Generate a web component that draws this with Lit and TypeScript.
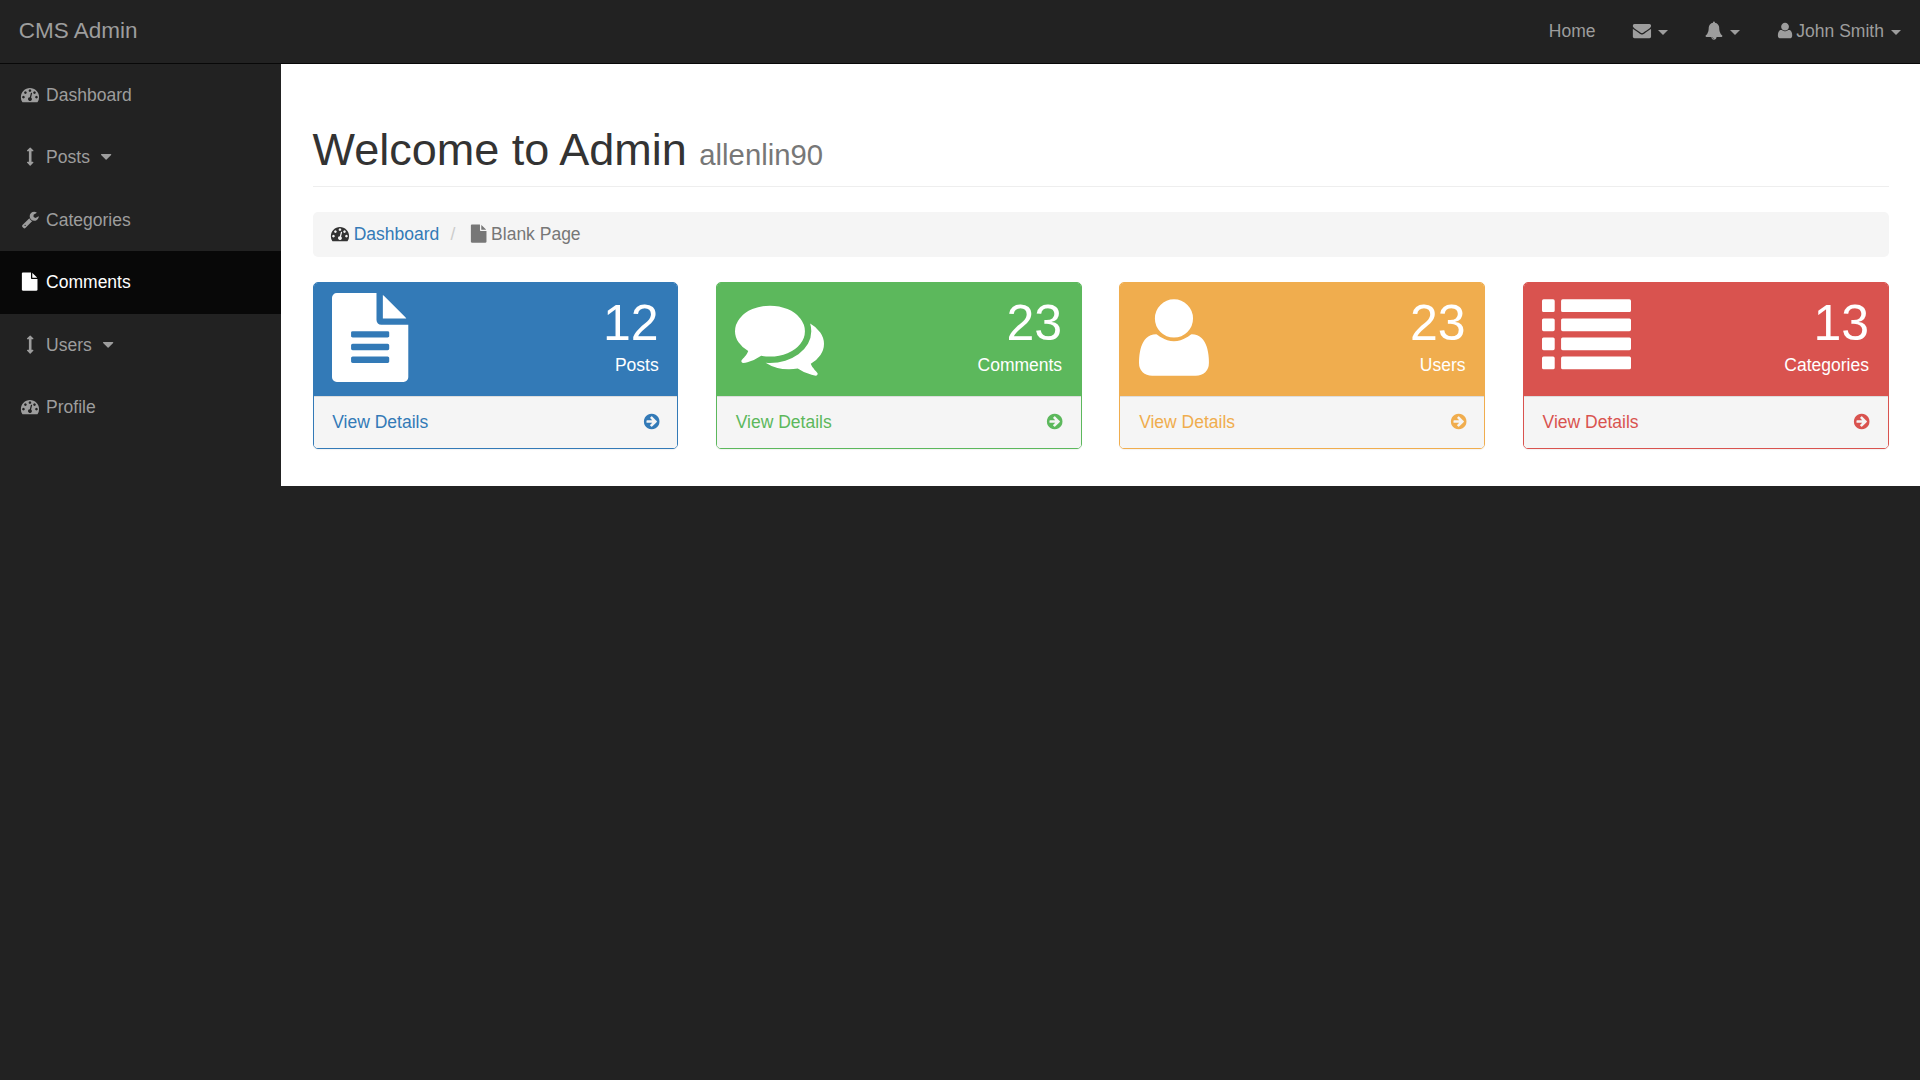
import { LitElement, html, css, svg, unsafeCSS } from "lit";
import { customElement, property } from "lit/decorators.js";

type Glyph = { w: number; d: string };

// Glyph outlines in font units: 1792 per em, baseline at y = 0, y axis pointing up.
const bars = [0, 384, 768, 1152]
  .map((y) => {
    const box = (x: number, w: number) =>
      `M${x + 32} ${y}h${w - 64}q32 0 32 32v192q0 32 -32 32h-${w - 64}q-32 0 -32 -32v-192q0 -32 32 -32z`;
    return box(0, 256) + box(384, 1408);
  })
  .join("");

const GLYPHS: Record<string, Glyph> = {
  dashboard: {
    w: 1792,
    d: "M384 384q0 53 -37.5 90.5t-90.5 37.5t-90.5 -37.5t-37.5 -90.5t37.5 -90.5t90.5 -37.5t90.5 37.5t37.5 90.5zM576 832q0 53 -37.5 90.5t-90.5 37.5t-90.5 -37.5t-37.5 -90.5t37.5 -90.5t90.5 -37.5t90.5 37.5t37.5 90.5zM1004 351l101 382q6 26 -7.5 48.5t-38.5 29.5t-48 -6.5t-30 -39.5l-101 -382q-60 -5 -107 -43.5t-63 -98.5q-20 -77 20 -146t117 -89t146 20t89 117q16 60 -6 117t-72 91zM1664 384q0 53 -37.5 90.5t-90.5 37.5t-90.5 -37.5t-37.5 -90.5t37.5 -90.5t90.5 -37.5t90.5 37.5t37.5 90.5zM1024 1024q0 53 -37.5 90.5t-90.5 37.5t-90.5 -37.5t-37.5 -90.5t37.5 -90.5t90.5 -37.5t90.5 37.5t37.5 90.5zM1472 832q0 53 -37.5 90.5t-90.5 37.5t-90.5 -37.5t-37.5 -90.5t37.5 -90.5t90.5 -37.5t90.5 37.5t37.5 90.5zM1792 384q0 -261 -141 -483q-19 -29 -54 -29h-1402q-35 0 -54 29q-141 221 -141 483q0 182 71 348t191 286t286 191t348 71t348 -71t286 -191t191 -286t71 -348z",
  },
  "arrows-v": {
    w: 640,
    d: "M640 1216q0 -26 -19 -45t-45 -19h-128v-1024h128q26 0 45 -19t19 -45t-19 -45l-256 -256q-19 -19 -45 -19t-45 19l-256 256q-19 19 -19 45t19 45t45 19h128v1024h-128q-26 0 -45 19t-19 45t19 45l256 256q19 19 45 19t45 -19l256 -256q19 -19 19 -45z",
  },
  wrench: {
    w: 1664,
    d: "M384 64q0 26 -19 45t-45 19t-45 -19t-19 -45t19 -45t45 -19t45 19t19 45zM1028 484l-682 -682q-37 -37 -90 -37q-52 0 -91 37l-106 108q-38 36 -38 90q0 53 38 91l681 681q39 -98 114.5 -173.5t173.5 -114.5zM1662 919q0 -39 -23 -106q-47 -134 -164.5 -217.5t-258.5 -83.5q-185 0 -316.5 131.5t-131.5 316.5t131.5 316.5t316.5 131.5q58 0 121.5 -16.5t107.5 -46.5q16 -11 16 -28t-16 -28l-293 -169v-224l193 -107q5 3 79 48.5t135.5 81t70.5 35.5q15 0 23.5 -10t8.5 -25z",
  },
  file: {
    w: 1536,
    d: "M1024 1024v472q22 -14 36 -28l408 -408q14 -14 28 -36h-472zM896 992q0 -40 28 -68t68 -28h544v-1056q0 -40 -28 -68t-68 -28h-1344q-40 0 -68 28t-28 68v1600q0 40 28 68t68 28h800v-544z",
  },
  "file-text": {
    w: 1536,
    d: "M1468 1060q14 -14 28 -36h-472v472q22 -14 36 -28zM992 896h544v-1056q0 -40 -28 -68t-68 -28h-1344q-40 0 -68 28t-28 68v1600q0 40 28 68t68 28h800v-544q0 -40 28 -68t68 -28zM1152 160v64q0 14 -9 23t-23 9h-704q-14 0 -23 -9t-9 -23v-64q0 -14 9 -23t23 -9h704q14 0 23 9t9 23zM1152 416v64q0 14 -9 23t-23 9h-704q-14 0 -23 -9t-9 -23v-64q0 -14 9 -23t23 -9h704q14 0 23 9t9 23zM1152 672v64q0 14 -9 23t-23 9h-704q-14 0 -23 -9t-9 -23v-64q0 -14 9 -23t23 -9h704q14 0 23 9t9 23z",
  },
  "caret-down": {
    w: 1024,
    d: "M1024 832q0 -26 -19 -45l-448 -448q-19 -19 -45 -19t-45 19l-448 448q-19 19 -19 45t19 45t45 19h896q26 0 45 -19t19 -45z",
  },
  envelope: {
    w: 1792,
    d: "M1792 826v-794q0 -66 -47 -113t-113 -47h-1472q-66 0 -113 47t-47 113v794q44 -49 101 -87q362 -246 497 -345q57 -42 92.5 -65.5t94.5 -48t110 -24.5h2q51 0 110 24.5t94.5 48t92.5 65.5q170 123 498 345q57 39 100 87zM1792 1120q0 -79 -49 -151t-122 -123q-376 -261 -468 -325q-10 -7 -42.5 -31t-54 -38.5t-52 -32.5t-57.5 -27t-50 -9h-2q-23 0 -50 9t-57.5 27t-52 32.5t-54 38.5t-42.5 31q-91 64 -262 182.5t-205 142.5q-62 42 -117 115.5t-55 136.5q0 78 41.5 130t118.5 52h1472q65 0 112.5 -47t47.5 -113z",
  },
  bell: {
    w: 1792,
    d: "M912 -160q0 16 -16 16q-59 0 -101.5 42.5t-42.5 101.5q0 16 -16 16t-16 -16q0 -73 51.5 -124.5t124.5 -51.5q16 0 16 16zM1728 128q0 -52 -38 -90t-90 -38h-448q0 -106 -75 -181t-181 -75t-181 75t-75 181h-448q-52 0 -90 38t-38 90q50 42 91 88t85 119.5t74.5 158.5t50 206t19.5 260q0 152 117 282.5t307 158.5q-8 19 -8 39q0 40 28 68t68 28t68 -28t28 -68q0 -20 -8 -39q190 -28 307 -158.5t117 -282.5q0 -139 19.5 -260t50 -206t74.5 -158.5t85 -119.5t91 -88z",
  },
  user: {
    w: 1408,
    d: "M1408 131q0 -120 -73 -189.5t-194 -69.5h-874q-121 0 -194 69.5t-73 189.5q0 53 3.5 103.5t14 109t26.5 108.5t43 97.5t62 81t85.5 53.5t111.5 20q9 0 42 -21.5t74.5 -48t108 -48t133.5 -21.5t133.5 21.5t108 48t74.5 48t42 21.5q61 0 111.5 -20t85.5 -53.5t62 -81t43 -97.5t26.5 -108.5t14 -109t3.5 -103.5zM1088 1024q0 -159 -112.5 -271.5t-271.5 -112.5t-271.5 112.5t-112.5 271.5t112.5 271.5t271.5 112.5t271.5 -112.5t112.5 -271.5z",
  },
  comments: {
    w: 1792,
    d: "M1408 768q0 -139 -94 -257t-256.5 -186.5t-353.5 -68.5q-86 0 -176 16q-124 -88 -278 -128q-36 -9 -86 -16h-3q-11 0 -20.5 8t-11.5 21q-1 3 -1 6.5t0.5 6.5t2 6l2.5 5t3.5 5.5t4 5t4.5 5t4 4.5q5 6 23 25t26 29.5t22.5 29t25 38.5t20.5 44q-124 72 -195 177t-71 224q0 139 94 257t256.5 186.5t353.5 68.5t353.5 -68.5t256.5 -186.5t94 -257zM1792 512q0 -120 -71 -224.5t-195 -176.5q10 -24 20.5 -44t25 -38.5t22.5 -29t26 -29.5t23 -25q1 -1 4 -4.5t4.5 -5t4 -5t3.5 -5.5l2.5 -5t2 -6t0.5 -6.5t-1 -6.5q-3 -14 -13 -22t-22 -7q-50 7 -86 16q-154 40 -278 128q-90 -16 -176 -16q-271 0 -472 132q58 -4 88 -4q161 0 309 45t264 129q125 92 192 212t67 254q0 77 -23 152q129 -71 204 -178t75 -230z",
  },
  list: { w: 1792, d: bars },
  "arrow-circle-right": {
    w: 1536,
    d: "M1285 640q0 27 -18 45l-91 91l-362 362q-18 18 -45 18t-45 -18l-91 -91q-18 -18 -18 -45t18 -45l189 -189h-502q-26 0 -45 -19t-19 -45v-128q0 -26 19 -45t45 -19h502l-189 -189q-19 -19 -19 -45t19 -45l91 -91q18 -18 45 -18t45 18l362 362l91 91q18 18 18 45zM1536 640q0 -209 -103 -385.5t-279.5 -279.5t-385.5 -103t-385.5 103t-279.5 279.5t-103 385.5t103 385.5t279.5 279.5t385.5 103t385.5 -103t279.5 -279.5t103 -385.5z",
  },
};

const icon = (name: string, cls = "") => {
  const g = GLYPHS[name];
  return html`<span class="icon ${cls}"
    ><svg viewBox="0 0 ${g.w} 1792" style="width:${g.w / 1792}em" aria-hidden="true">
      ${svg`<path transform="translate(0 1536) scale(1 -1)" d=${g.d} />`}
    </svg></span
  >`;
};

const FONT = unsafeCSS(`"Liberation Sans", Arial, Helvetica, sans-serif`);

const base = css`
  * {
    box-sizing: border-box;
  }
  a {
    color: inherit;
    text-decoration: none;
  }
  .icon {
    display: inline-block;
    line-height: 1;
    text-align: center;
  }
  .icon svg {
    display: inline-block;
    height: 1em;
    vertical-align: -0.143em;
    fill: currentColor;
    overflow: visible;
    transform: scale(1.04);
    transform-origin: 20% 80%;
  }
  .fw {
    width: 1.2857em;
  }
`;

@customElement("stat-panel")
export class StatPanel extends LitElement {
  @property() icon = "";
  @property() count = "";
  @property() label = "";
  @property({ reflect: true }) tone = "primary";

  static styles = [
    base,
    css`
      :host {
        display: block;
        --tone: #337ab7;
      }
      :host([tone="green"]) {
        --tone: #5cb85c;
      }
      :host([tone="yellow"]) {
        --tone: #f0ad4e;
      }
      :host([tone="red"]) {
        --tone: #d9534f;
      }
      .panel {
        border: 1px solid var(--tone);
        border-radius: 5px;
        background: #fff;
        box-shadow: 0 1px 1px rgba(0, 0, 0, 0.05);
      }
      .heading {
        display: flex;
        justify-content: space-between;
        height: 113.5px;
        padding: 12.5px 18.75px;
        background: var(--tone);
        color: #fff;
        border-radius: 3.75px 3.75px 0 0;
      }
      .big {
        font-size: 89px;
        height: 89px;
        margin: -2.25px 0 0 -0.25px;
      }
      .big svg {
        display: block;
        transform: none;
      }
      .figures {
        text-align: right;
      }
      .count {
        font-size: 50px;
        line-height: 57.5px;
      }
      .footer {
        display: flex;
        justify-content: space-between;
        height: 51.75px;
        padding: 12.5px 18.75px;
        border-top: 1px solid #ddd;
        background: #f5f5f5;
        color: var(--tone);
        border-radius: 0 0 3.75px 3.75px;
      }
      .footer .icon {
        line-height: inherit;
      }
    `,
  ];

  render() {
    return html`<div class="panel">
      <div class="heading">
        ${icon(this.icon, "big")}
        <div class="figures">
          <div class="count">${this.count}</div>
          <div>${this.label}</div>
        </div>
      </div>
      <a class="footer"><span>View Details</span>${icon("arrow-circle-right")}</a>
    </div>`;
  }
}

const MENU = [
  { icon: "dashboard", label: "Dashboard" },
  { icon: "arrows-v", label: "Posts", caret: true },
  { icon: "wrench", label: "Categories" },
  { icon: "file", label: "Comments", active: true },
  { icon: "arrows-v", label: "Users", caret: true },
  { icon: "dashboard", label: "Profile" },
];

const STATS = [
  { icon: "file-text", count: "12", label: "Posts", tone: "primary" },
  { icon: "comments", count: "23", label: "Comments", tone: "green" },
  { icon: "user", count: "23", label: "Users", tone: "yellow" },
  { icon: "list", count: "13", label: "Categories", tone: "red" },
];

@customElement("app-root")
export class AppRoot extends LitElement {
  static styles = [
    base,
    css`
      :host {
        display: block;
        min-height: 100vh;
        background: #222;
        color: #333;
        font: 17.5px/25px ${FONT};
      }
      .navbar {
        display: flex;
        justify-content: space-between;
        height: 63.75px;
        border-bottom: 1px solid #080808;
        color: #9d9d9d;
      }
      .brand {
        padding: 18px 18.75px;
        font-size: 22.5px;
      }
      .top-nav {
        display: flex;
      }
      .top-nav a {
        padding: 18.75px;
        white-space: nowrap;
      }
      .caret {
        display: inline-block;
        margin-left: 2.5px;
        vertical-align: middle;
        border-top: 5px solid;
        border-left: 5px solid transparent;
        border-right: 5px solid transparent;
      }
      .body {
        display: grid;
        grid-template-columns: 281.25px 1fr;
        align-items: start;
      }
      .menu a {
        display: block;
        height: 62.5px;
        padding: 18.75px;
        color: #9d9d9d;
      }
      .menu a.active {
        background: #080808;
        color: #fff;
      }
      .page {
        padding: 61.25px 31.25px 36.75px;
        background: #fff;
      }
      h1 {
        margin: 0 0 25px;
        padding-bottom: 11.25px;
        border-bottom: 1px solid #eee;
        font-size: 45px;
        font-weight: 400;
        line-height: 49.5px;
      }
      h1 small {
        font-size: 65%;
        line-height: 1;
        color: #777;
      }
      .breadcrumb {
        margin-bottom: 25px;
        padding: 10px 18.75px;
        height: 45px;
        border-radius: 5px;
        background: #f5f5f5;
      }
      .breadcrumb a {
        color: #337ab7;
      }
      .slash {
        padding: 0 6.25px;
        color: #ccc;
      }
      .current {
        color: #777;
      }
      .panels {
        display: grid;
        grid-template-columns: repeat(4, 1fr);
        gap: 37.5px;
      }
    `,
  ];

  render() {
    return html`
      <header class="navbar">
        <a class="brand">CMS Admin</a>
        <nav class="top-nav">
          <a>Home</a>
          <a>${icon("envelope")} <b class="caret"></b></a>
          <a>${icon("bell")} <b class="caret"></b></a>
          <a>${icon("user")} John Smith <b class="caret"></b></a>
        </nav>
      </header>
      <div class="body">
        <nav class="menu">
          ${MENU.map(
            (m) => html`<a class=${m.active ? "active" : ""}
              >${icon(m.icon, "fw")} ${m.label} ${m.caret ? icon("caret-down", "fw") : ""}</a
            >`
          )}
        </nav>
        <main class="page">
          <h1>Welcome to Admin <small>allenlin90</small></h1>
          <div class="breadcrumb">
            ${icon("dashboard")} <a>Dashboard</a>
            <span class="slash">/&nbsp;</span>
            <span class="current">${icon("file")} Blank Page</span>
          </div>
          <div class="panels">
            ${STATS.map(
              (s) => html`<stat-panel
                .icon=${s.icon}
                .count=${s.count}
                .label=${s.label}
                tone=${s.tone}
              ></stat-panel>`
            )}
          </div>
        </main>
      </div>
    `;
  }
}
